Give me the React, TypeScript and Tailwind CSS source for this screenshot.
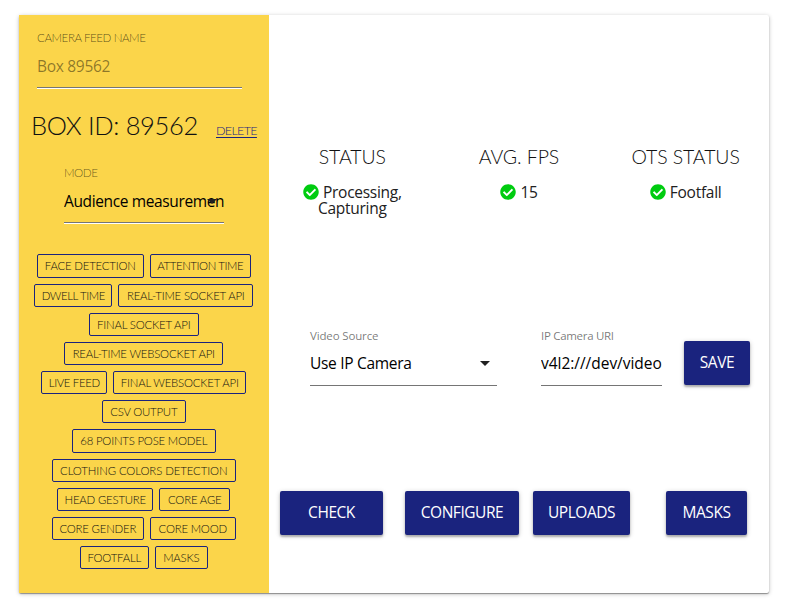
import { ReactNode } from "react";
import { FaCheckCircle } from "react-icons/fa";

const geometric = "font-['Lato','Inter',sans-serif] font-light";

type Tag = { label: string; box: string };

const tagRows: Tag[][] = [
  [
    { label: "FACE DETECTION", box: "w-[107px] h-6" },
    { label: "ATTENTION TIME", box: "w-[101px] h-6 tracking-[-0.4px]" },
  ],
  [
    { label: "DWELL TIME", box: "w-[78px] tracking-[-0.4px]" },
    { label: "REAL-TIME SOCKET API", box: "w-[135px]" },
  ],
  [{ label: "FINAL SOCKET API", box: "w-[110px]" }],
  [{ label: "REAL-TIME WEBSOCKET API", box: "w-[159px]" }],
  [
    { label: "LIVE FEED", box: "w-[66px] tracking-[-0.35px]" },
    { label: "FINAL WEBSOCKET API", box: "w-[133px]" },
  ],
  [{ label: "CSV OUTPUT", box: "w-[84px]" }],
  [{ label: "68 POINTS POSE MODEL", box: "w-[144px] h-6" }],
  [{ label: "CLOTHING COLORS DETECTION", box: "w-[184px] tracking-[-0.1px]" }],
  [
    { label: "HEAD GESTURE", box: "w-[96px]" },
    { label: "CORE AGE", box: "w-[71px]" },
  ],
  [
    { label: "CORE GENDER", box: "w-[92px]" },
    { label: "CORE MOOD", box: "w-[86px]" },
  ],
  [
    { label: "FOOTFALL", box: "w-[69px]" },
    { label: "MASKS", box: "w-[53px]" },
  ],
];

function Caret() {
  return (
    <svg className="block" width="10" height="5" viewBox="0 0 10 5" fill="#212121">
      <path d="M0 0h10L5 5z" />
    </svg>
  );
}

function Button({ children, box }: { children: ReactNode; box: string }) {
  return (
    <button
      className={`flex h-11 items-center justify-center rounded-[2px] bg-[#1a237e] text-[15.5px] tracking-[-0.45px] text-white shadow-[0_2px_2px_0_rgba(0,0,0,0.24),0_1px_5px_0_rgba(0,0,0,0.2)] ${box}`}
    >
      {children}
    </button>
  );
}

function Stat({ title, children }: { title: string; children: ReactNode }) {
  return (
    <div className="flex w-1/3 flex-col items-center">
      <h2 className={`${geometric} text-[19.5px] leading-6 tracking-[-0.1px] text-[#111]`}>{title}</h2>
      <div className="mt-[15px] text-center text-[15.5px] leading-4 tracking-[-0.28px] text-[#212121]">
        {children}
      </div>
    </div>
  );
}

function Check() {
  return <FaCheckCircle className="-my-1 mr-1 inline-block size-4 align-[2px] text-[#00cc10]" />;
}

export default function App() {
  return (
    <div className="h-[606px] w-[799px] bg-white pt-[15px] pl-[19px] font-['Open_Sans','Noto_Sans',sans-serif]">
      <div className="flex h-[578px] w-[750px] rounded-[2px] bg-white shadow-[0_1px_4px_0_rgba(0,0,0,0.25),0_1px_1px_0_rgba(0,0,0,0.35)]">
        <aside className={`flex w-[250px] shrink-0 flex-col bg-[#fbd54a] ${geometric}`}>
          <label className="mt-[15px] ml-[18px] text-[11.6px] leading-4 tracking-[-0.45px] text-black/65">
            CAMERA FEED NAME
          </label>
          <div className="mt-[9px] ml-[18px] h-[33px] w-[205px] border-b border-[#757575] font-['Open_Sans'] text-[15.5px] leading-[22px] font-normal tracking-[-0.3px] text-black/45 shadow-[0_1px_0_white]">
            Box 89562
          </div>
          <div className="mt-[19px] ml-3 flex h-[36px] items-baseline">
            <h1 className="w-[185px] text-[25.5px] leading-9 tracking-[-0.35px] whitespace-nowrap text-[#111]">
              BOX ID: 89562
            </h1>
            <a className="text-[12.5px] tracking-[-0.65px] text-[#1a237e] underline underline-offset-2">DELETE</a>
          </div>
          <label className="mt-[22px] ml-[45px] text-[11.6px] leading-4 tracking-[-0.45px] text-black/60">MODE</label>
          <div className="relative mt-[9px] ml-[45px] h-[33px] w-40 border-b border-[#757575] font-['Open_Sans'] font-normal shadow-[0_1px_0_white]">
            <div className="overflow-hidden text-[15.5px] leading-[22px] tracking-[-0.37px] whitespace-nowrap text-black">
              Audience measuremen
            </div>
            <div className="absolute top-[9px] right-[7px]">
              <Caret />
            </div>
          </div>
          <div className="mt-[31px] flex flex-col gap-[6px] pr-[0.5px]">
            {tagRows.map((row, i) => (
              <div key={i} className="flex justify-center gap-1.5">
                {row.map((tag) => (
                  <span
                    key={tag.label}
                    className={`flex min-h-[23px] items-center justify-center rounded-[2px] border border-[#1a237e] text-[11.4px] leading-none whitespace-nowrap text-[#111] ${tag.box.includes("tracking") ? "" : "tracking-[-0.2px]"} ${tag.box}`}
                  >
                    {tag.label}
                  </span>
                ))}
              </div>
            ))}
          </div>
        </aside>

        <main className="flex w-[500px] flex-col">
          <section className="mt-[130px] flex h-[76px]">
            <Stat title="STATUS">
              <Check />
              Processing,
              <br />
              Capturing
            </Stat>
            <Stat title="AVG. FPS">
              <Check />
              15
            </Stat>
            <Stat title="OTS STATUS">
              <Check />
              Footfall
            </Stat>
          </section>

          <section className="mt-[107px] ml-[41px] flex">
            <div className="w-[187px]">
              <label className="block text-[11.5px] leading-4 tracking-[-0.15px] text-black/54">Video Source</label>
              <div className="mt-2 flex h-[34px] justify-between border-b border-[#757575] pr-[7px] text-[15.5px] leading-[22px] tracking-[-0.3px]">
                <span>Use IP Camera</span>
                <span className="mt-[9px]">
                  <Caret />
                </span>
              </div>
            </div>
            <div className="ml-11 w-[121px]">
              <label className="block text-[11.5px] leading-4 tracking-[-0.3px] text-black/54">IP Camera URI</label>
              <div className="mt-2 h-[34px] overflow-hidden border-b border-[#757575] text-[15.5px] leading-[22px] tracking-[-0.03px] whitespace-nowrap">
                v4l2:///dev/video
              </div>
            </div>
            <div className="mt-[13px] ml-[22px]">
              <Button box="w-[66px]">SAVE</Button>
            </div>
          </section>

          <section className="mt-[105px] ml-[11px] flex">
            <Button box="w-[103px]">CHECK</Button>
            <Button box="ml-[22px] w-[114px]">CONFIGURE</Button>
            <Button box="ml-[14px] w-[97px]">UPLOADS</Button>
            <Button box="ml-9 w-[81px]">MASKS</Button>
          </section>
        </main>
      </div>
    </div>
  );
}
